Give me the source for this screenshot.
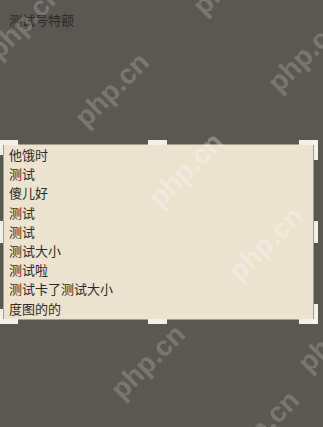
const lines = [
  "他饿时",
  "测试",
  "傻儿好",
  "测试",
  "测试",
  "测试大小",
  "测试啦",
  "测试卡了测试大小",
  "度图的的",
];

// php.cn watermark stamps laid over the screenshot (centre points)
const marks = [
  { cx: 112, cy: 90, tone: "text-white/20" },
  { cx: 305, cy: 55, tone: "text-white/20" },
  { cx: 25, cy: 22, tone: "text-white/20" },
  { cx: 230, cy: -22, tone: "text-white/20" },
  { cx: 186, cy: 170, tone: "text-white/30" },
  { cx: 266, cy: 244, tone: "text-white/30" },
  { cx: 148, cy: 362, tone: "text-white/20" },
  { cx: 262, cy: 428, tone: "text-white/20" },
  { cx: 335, cy: 335, tone: "text-white/20" },
];

const handle = "absolute bg-[#f4f1ea]";

export default function App() {
  return (
    <div
      className="relative w-[323px] h-[427px] overflow-hidden bg-[#5b5852] text-[13px] text-[#2b2a27]"
      style={{ fontFamily: '"Noto Sans CJK SC", "Noto Sans", sans-serif' }}
    >
      <div className="pl-[9px] pt-[10px] leading-[20px]">测试号特额</div>

      {/* selected text box with resize handles */}
      <div className="relative mt-[114px] ml-[3px] w-[311px] h-[176px]">
        <div className="h-full border border-[#a59d8f] bg-[#ede3d0] pl-[5px] leading-[19.2px]">
          {lines.map((t, i) => (
            <div key={i}>{t}</div>
          ))}
        </div>

        <div className={`${handle} left-[-3px] top-[-4px] w-[18px] h-[5px]`} />
        <div className={`${handle} left-[-3px] top-[-4px] w-[3px] h-[15px]`} />
        <div className={`${handle} right-[-4px] top-[-4px] w-[19px] h-[5px]`} />
        <div className={`${handle} right-[-4px] top-[-4px] w-[4px] h-[20px]`} />
        <div className={`${handle} left-[-3px] bottom-[-4px] w-[18px] h-[5px]`} />
        <div className={`${handle} left-[-3px] bottom-[-4px] w-[3px] h-[15px]`} />
        <div className={`${handle} right-[-4px] bottom-[-4px] w-[19px] h-[5px]`} />
        <div className={`${handle} right-[-4px] bottom-[-4px] w-[4px] h-[20px]`} />

        <div className={`${handle} left-[145px] top-[-4px] w-[19px] h-[5px]`} />
        <div className={`${handle} left-[145px] bottom-[-4px] w-[19px] h-[5px]`} />
        <div className={`${handle} right-[-4px] top-[77px] w-[4px] h-[22px]`} />
        <div className={`${handle} left-[-3px] top-[77px] w-[3px] h-[22px]`} />
      </div>

      {marks.map((m, i) => (
        <div
          key={i}
          className={`pointer-events-none absolute w-[96px] h-[30px] text-center -rotate-45 text-[28px] font-bold leading-[30px] ${m.tone}`}
          style={{ left: m.cx - 48, top: m.cy - 15, fontFamily: '"Liberation Sans", sans-serif' }}
        >
          php.cn
        </div>
      ))}
    </div>
  );
}
